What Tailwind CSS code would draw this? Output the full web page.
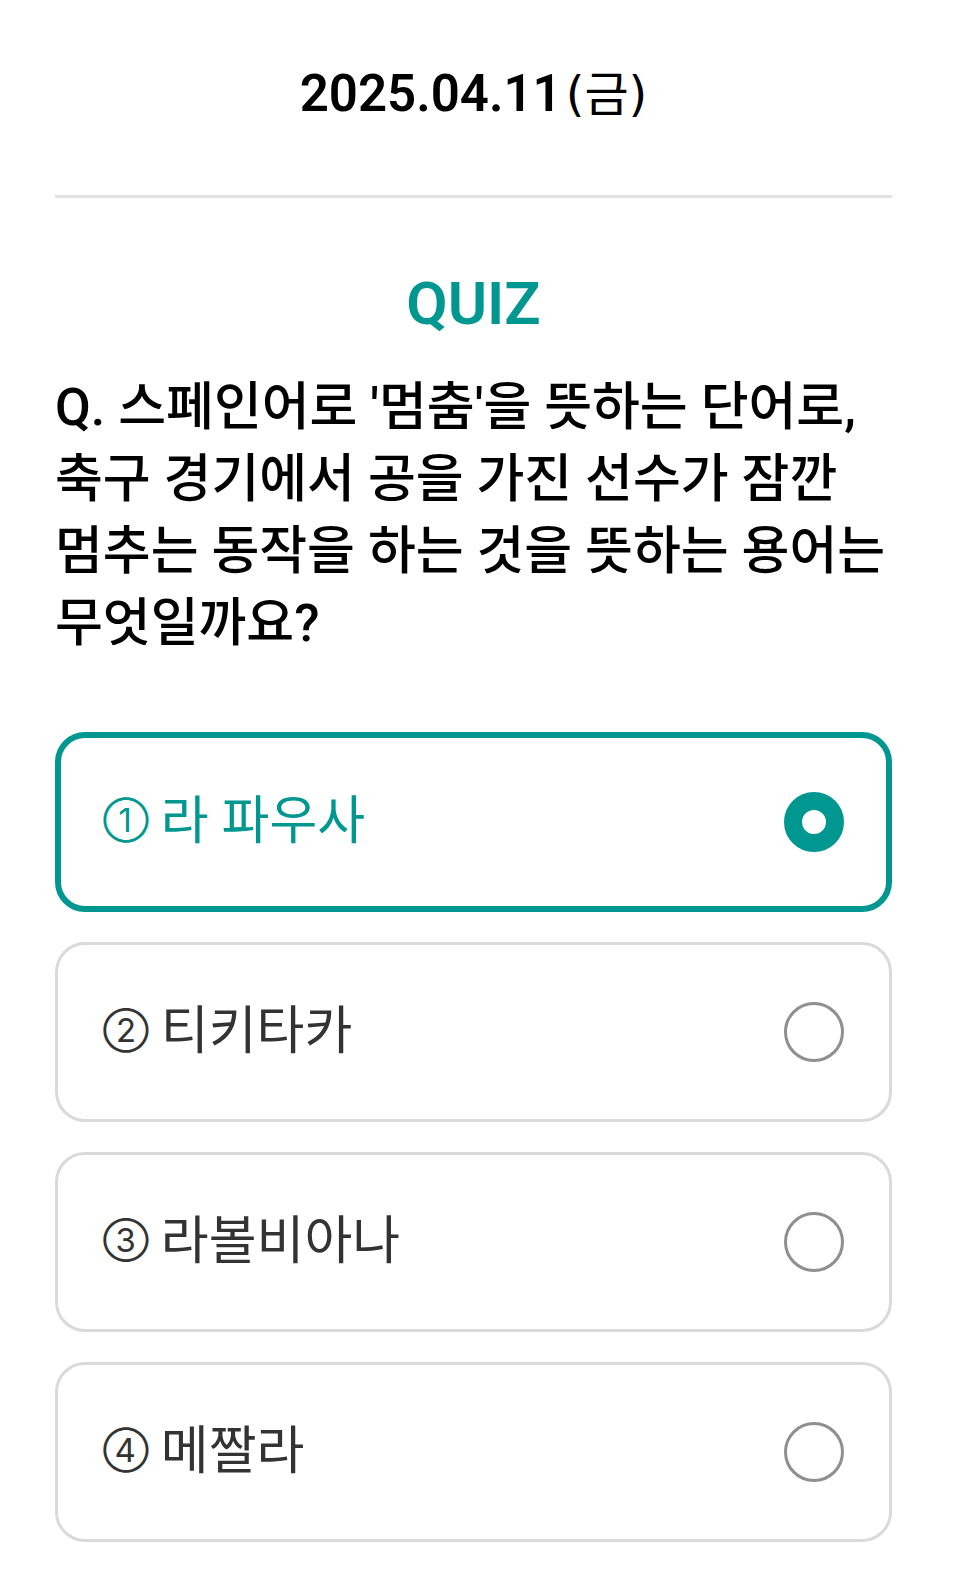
<!DOCTYPE html>
<html lang="ko">
<head>
<meta charset="utf-8">
<meta name="viewport" content="width=device-width, initial-scale=1">
<title>QUIZ</title>
<script src="https://cdn.jsdelivr.net/npm/@tailwindcss/browser@4"></script>
</head>
<body class="bg-white text-black font-['Roboto','Noto_Sans_CJK_KR',sans-serif]">
<main class="pl-[55px] pr-[66px] pb-11">
  <header class="flex h-[198px] justify-center border-b-3 border-[#e2e2e2] pt-[60px]">
    <h1 class="flex items-baseline gap-1 text-[51px] leading-[68px] font-semibold">2025.04.11<span class="font-['DejaVu_Sans','Noto_Sans_CJK_KR',sans-serif] text-[48px] font-normal">(금)</span></h1>
  </header>
  <form>
    <h2 class="mt-[68px] text-center text-[60px] leading-[76px] font-semibold text-[#009791]">QUIZ</h2>
    <p class="mt-[30px] text-[52px] leading-[72px] font-medium break-keep">Q. 스페인어로 '멈춤'을 뜻하는 단어로,<br>축구 경기에서 공을 가진 선수가 잠깐<br>멈추는 동작을 하는 것을 뜻하는 용어는<br>무엇일까요?</p>
    <fieldset class="mt-[72px] flex flex-col gap-[30px] text-[52px] leading-[72px] text-[#333]">
      <label class="flex h-[180px] items-center justify-between rounded-[30px] border-3 border-[#dadada] px-[45px] has-checked:border-6 has-checked:border-[#009791] has-checked:px-[42px] has-checked:text-[#009791]">
        <span class="flex items-center gap-3"><span class="pb-1 font-['Inter'] text-[33px]">①</span> <span>라 파우사</span></span>
        <input type="radio" name="answer" checked class="size-[60px] appearance-none rounded-full border-3 border-[#8f8f8f] checked:border-18 checked:border-[#009791]">
      </label>
      <label class="flex h-[180px] items-center justify-between rounded-[30px] border-3 border-[#dadada] px-[45px] has-checked:border-6 has-checked:border-[#009791] has-checked:px-[42px] has-checked:text-[#009791]">
        <span class="flex items-center gap-3"><span class="pb-1 font-['Inter'] text-[33px]">②</span> <span>티키타카</span></span>
        <input type="radio" name="answer" class="size-[60px] appearance-none rounded-full border-3 border-[#8f8f8f] checked:border-18 checked:border-[#009791]">
      </label>
      <label class="flex h-[180px] items-center justify-between rounded-[30px] border-3 border-[#dadada] px-[45px] has-checked:border-6 has-checked:border-[#009791] has-checked:px-[42px] has-checked:text-[#009791]">
        <span class="flex items-center gap-3"><span class="pb-1 font-['Inter'] text-[33px]">③</span> <span>라볼비아나</span></span>
        <input type="radio" name="answer" class="size-[60px] appearance-none rounded-full border-3 border-[#8f8f8f] checked:border-18 checked:border-[#009791]">
      </label>
      <label class="flex h-[180px] items-center justify-between rounded-[30px] border-3 border-[#dadada] px-[45px] has-checked:border-6 has-checked:border-[#009791] has-checked:px-[42px] has-checked:text-[#009791]">
        <span class="flex items-center gap-3"><span class="pb-1 font-['Inter'] text-[33px]">④</span> <span>메짤라</span></span>
        <input type="radio" name="answer" class="size-[60px] appearance-none rounded-full border-3 border-[#8f8f8f] checked:border-18 checked:border-[#009791]">
      </label>
    </fieldset>
  </form>
</main>
</body>
</html>
